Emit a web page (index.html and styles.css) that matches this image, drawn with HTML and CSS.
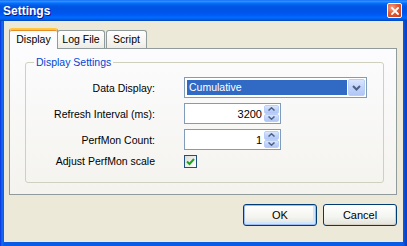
FILE: index.html
```html
<!DOCTYPE html>
<html lang="en">
<head>
<meta charset="UTF-8" />
<title>Settings</title>
<link rel="stylesheet" href="styles.css">
</head>
<body>

<div class="window">
    <div class="titlebar">
        <span class="title">Settings</span>
        <span class="close-btn">
            <svg width="8" height="8" viewBox="0 0 8 8">
                <path d="M1 1 L7 7 M7 1 L1 7" stroke="#fff" stroke-width="1.8" stroke-linecap="square" />
            </svg>
        </span>
    </div>

    <div class="client">
        <div class="tabs">
            <div class="tab tab-display active">Display</div>
            <div class="tab tab-log">Log File</div>
            <div class="tab tab-script">Script</div>
        </div>

        <div class="page">
            <fieldset class="group">
                <legend>Display Settings</legend>
                <div class="form-grid">
                    <label>Data Display:</label>
                    <div class="combo">
                        <span class="combo-text">Cumulative</span>
                        <span class="combo-btn">
                            <svg width="9" height="6" viewBox="0 0 9 6">
                                <path d="M1 1 L4.5 4.5 L8 1" fill="none" stroke="#4d6185" stroke-width="2" />
                            </svg>
                        </span>
                    </div>

                    <label>Refresh Interval (ms):</label>
                    <div class="spin">
                        <span class="spin-value">3200</span>
                        <span class="spin-btns">
                            <span class="spin-up"><svg width="7" height="4" viewBox="0 0 7 4"><path d="M0.5 3.5 L3.5 0.8 L6.5 3.5" fill="none" stroke="#4d6185" stroke-width="1.5" /></svg></span>
                            <span class="spin-down"><svg width="7" height="4" viewBox="0 0 7 4"><path d="M0.5 0.5 L3.5 3.2 L6.5 0.5" fill="none" stroke="#4d6185" stroke-width="1.5" /></svg></span>
                        </span>
                    </div>

                    <label>PerfMon Count:</label>
                    <div class="spin">
                        <span class="spin-value">1</span>
                        <span class="spin-btns">
                            <span class="spin-up"><svg width="7" height="4" viewBox="0 0 7 4"><path d="M0.5 3.5 L3.5 0.8 L6.5 3.5" fill="none" stroke="#4d6185" stroke-width="1.5" /></svg></span>
                            <span class="spin-down"><svg width="7" height="4" viewBox="0 0 7 4"><path d="M0.5 0.5 L3.5 3.2 L6.5 0.5" fill="none" stroke="#4d6185" stroke-width="1.5" /></svg></span>
                        </span>
                    </div>

                    <label class="check-label">Adjust PerfMon scale</label>
                    <span class="checkbox">
                        <svg width="9" height="9" viewBox="0 0 9 9">
                            <path d="M1 4.5 L3.5 7 L8 2" fill="none" stroke="#21a121" stroke-width="2" />
                        </svg>
                    </span>
                </div>
            </fieldset>
        </div>

        <div class="buttons">
            <button class="btn btn-default">OK</button>
            <button class="btn">Cancel</button>
        </div>
    </div>
</div>

</body>
</html>
```

FILE: styles.css
```css
body {
    margin: 0;
    padding: 0;
    font-family: 'Liberation Sans', Arial, sans-serif;
    font-size: 10.5px;
    color: #000;
    background-color: #0a5ae8;
}

.window {
    width: 407px;
    height: 246px;
    display: flex;
    flex-direction: column;
    background: linear-gradient(to right, #0831d9 0px, #166cf5 2px, #0a5ae8 4px, #0a5ae8 403px, #0841c6 406px);
}

/* Barra de titulo */
.titlebar {
    height: 21px;
    display: flex;
    align-items: center;
    padding: 0 5px 0 3px;
    background: linear-gradient(to bottom, #0058ee 0%, #3593ff 4%, #288eff 8%, #127dff 12%, #036ffc 16%, #0262ee 22%, #0057e5 30%, #0054e3 40%, #0055eb 60%, #005bf5 72%, #026afe 82%, #0062ef 90%, #0052d6 96%, #0040ab 100%);
}

.title {
    color: #fff;
    font-weight: bold;
    font-size: 12px;
    text-shadow: 1px 1px 0 #0f1089;
    padding-top: 1px;
}

.close-btn {
    margin-left: auto;
    width: 13px;
    height: 13px;
    border: 1px solid #fff;
    border-radius: 2px;
    display: flex;
    align-items: center;
    justify-content: center;
    background: radial-gradient(circle at 30% 30%, #f5a38a 0%, #e45a32 45%, #c83b16 100%);
}

.client {
    flex: 1;
    margin: 0 4px 4px 4px;
    padding: 6px 6px 0 5px;
    background-color: #ece9d8;
    display: flex;
    flex-direction: column;
}

/* Abas */
.tabs {
    display: flex;
    align-items: flex-end;
    height: 21px;
    position: relative;
    z-index: 1;
}

.tab {
    height: 17px;
    line-height: 17px;
    text-align: center;
    border: 1px solid #919b9c;
    border-bottom: none;
    border-radius: 3px 3px 0 0;
    background: linear-gradient(to bottom, #fefefe, #f4f3ee 70%, #ecebe6);
    box-sizing: content-box;
}

.tab-display {
    width: 47px;
}

.tab-log {
    width: 46px;
    margin-left: -1px;
}

.tab-script {
    width: 39px;
    margin-left: 1px;
}

.tab.active {
    height: 19px;
    line-height: 19px;
    border-top: 2px solid #ffc83c;
    box-shadow: inset 0 1px 0 #e68b2c;
    background: #fcfcfe;
    margin-bottom: -1px;
    height: 19px;
    border-radius: 3px 3px 0 0;
}

.page {
    border: 1px solid #919b9c;
    background: linear-gradient(to bottom, #fcfcfe, #f4f3ee);
    padding: 7px 12px 11px 15px;
    margin-right: 0;
}

/* Grupo */
.group {
    margin: 0;
    padding: 8px 0 14px 0;
    border: 1px solid #d0d0bf;
    border-radius: 3px;
}

.group legend {
    margin-left: 8px;
    padding: 0 2px;
    color: #0046d5;
    line-height: 13px;
}

.form-grid {
    display: grid;
    grid-template-columns: 129px auto;
    grid-template-rows: 21px 21px 21px 13px;
    column-gap: 29px;
    row-gap: 5px;
    align-items: center;
}

.form-grid label {
    text-align: right;
    white-space: nowrap;
}

.check-label {
    line-height: 13px;
}

.combo {
    width: 178px;
    height: 19px;
    border: 1px solid #7f9db9;
    background: #fff;
    display: flex;
    align-items: center;
    padding: 0 1px 0 2px;
}

.combo-text {
    flex: 1;
    height: 15px;
    line-height: 15px;
    background-color: #316ac5;
    color: #fff;
    padding-left: 2px;
    margin-right: 1px;
}

.combo-btn,
.spin-up,
.spin-down {
    display: flex;
    align-items: center;
    justify-content: center;
    background: linear-gradient(to bottom, #dae6fd, #c1d3fb 50%, #b1c7f5);
    border: 1px solid #bacef6;
    border-radius: 2px;
    box-sizing: border-box;
}

.combo-btn {
    width: 17px;
    height: 17px;
}

.spin {
    width: 94px;
    height: 19px;
    border: 1px solid #7f9db9;
    background: #fff;
    display: flex;
    align-items: center;
    padding-right: 1px;
}

.spin-value {
    flex: 1;
    text-align: right;
    padding-right: 2px;
    font-size: 11px;
}

.spin-btns {
    display: flex;
    flex-direction: column;
    width: 15px;
    height: 17px;
}

.spin-up,
.spin-down {
    flex: 1;
    width: 15px;
}

.checkbox {
    width: 11px;
    height: 11px;
    border: 1px solid #1c5180;
    background: linear-gradient(135deg, #dcdcd7, #fff);
    display: flex;
    align-items: center;
    justify-content: center;
}

/* Botoes */
.buttons {
    display: flex;
    justify-content: flex-end;
    gap: 6px;
    margin-top: 9px;
}

.btn {
    width: 74px;
    height: 22px;
    padding: 0;
    font-family: 'Liberation Sans', Arial, sans-serif;
    font-size: 11px;
    color: #000;
    border: 1px solid #003c74;
    border-radius: 3px;
    background: linear-gradient(to bottom, #fff, #f4f4f0 60%, #e3e2da);
    box-shadow: inset -1px -1px 0 #d6d0c5;
}

.btn-default {
    box-shadow: inset 0 0 0 1px #9ebdf3, inset -1px -1px 0 2px #cee7ff;
}
```
